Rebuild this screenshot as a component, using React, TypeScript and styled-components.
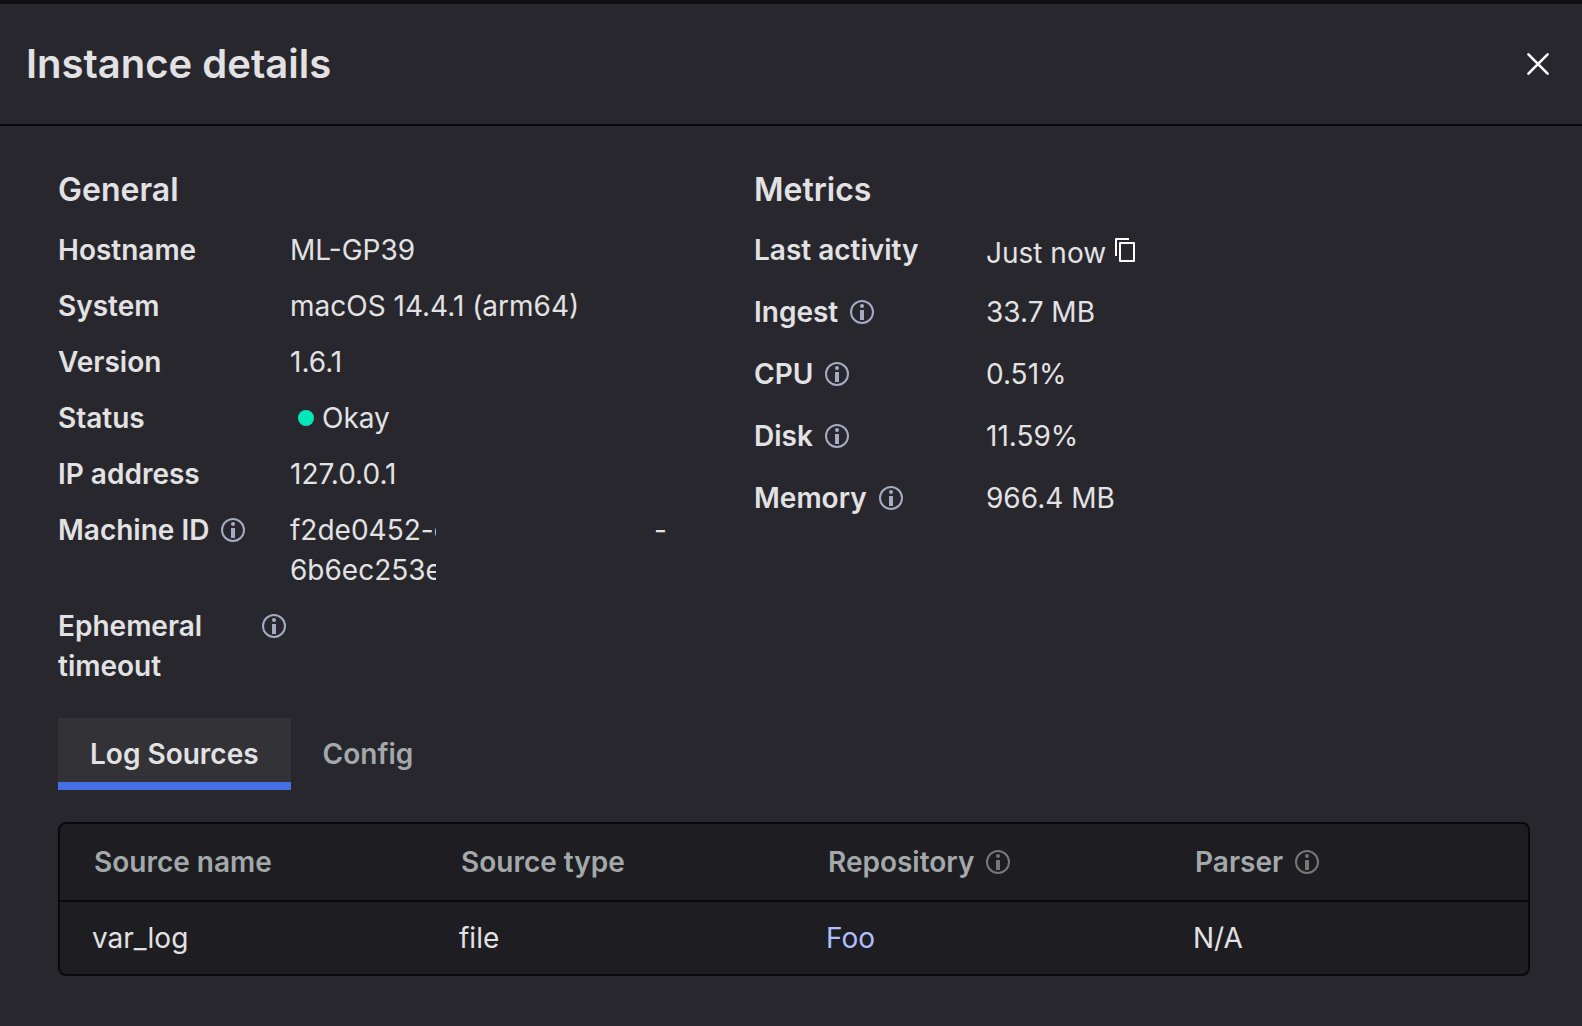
import React, { useState } from 'react';
import styled, { createGlobalStyle } from 'styled-components';

const color = {
  edge: '#101012',
  surface: '#28272d',
  line: '#09090b',
  table: '#1e1d22',
  tab: '#333237',
  text: '#e2e2e4',
  muted: '#a3a9ab',
  accent: '#466fe6',
  link: '#b1beff',
  ok: '#05e7ba',
  icon: '#a6abc3',
  iconMuted: '#777777',
};

const GlobalStyle = createGlobalStyle`
  *, *::before, *::after { box-sizing: border-box; }
  body {
    margin: 0;
    background: ${color.surface};
    color: ${color.text};
    font: 400 28px/40px Inter, "Liberation Sans", sans-serif;
  }
  h1, h2, dl, dd, dt { margin: 0; }
`;

const Panel = styled.main`
  min-height: 100vh;
  border-top: 4px solid ${color.edge};
`;

const Header = styled.header`
  display: flex;
  align-items: center;
  justify-content: space-between;
  height: 122px;
  padding: 0 24px 0 26px;
  border-bottom: 2px solid ${color.line};
`;

const Title = styled.h1`
  font-size: 40px;
  font-weight: 600;
  line-height: 48px;
`;

const IconButton = styled.button`
  display: flex;
  align-items: center;
  justify-content: center;
  height: 40px;
  padding: 0;
  border: 0;
  background: none;
  color: #ffffff;
  cursor: pointer;
`;

const CloseButton = styled(IconButton)`
  width: 40px;
`;

const Content = styled.div`
  padding: 44px 52px 48px 58px;
`;

const Groups = styled.div`
  display: grid;
  grid-template-columns: repeat(2, minmax(0, 1fr));
  max-width: 1392px;
`;

const GroupTitle = styled.h2`
  margin-bottom: 20px;
  font-size: 32px;
  font-weight: 600;
  line-height: 40px;
`;

const Details = styled.dl`
  display: flex;
  flex-direction: column;
  gap: 16px;
`;

const Row = styled.div<{ $tall?: boolean }>`
  display: grid;
  grid-template-columns: 232px minmax(0, 1fr);
  min-height: ${(p) => (p.$tall ? 46 : 40)}px;
`;

const Label = styled.dt`
  display: flex;
  gap: 12px;
  padding-right: 4px;
  font-weight: 600;
`;

const Status = styled.dd`
  display: flex;
  align-items: center;
  gap: 8px;
  padding-left: 8px;
`;

const Dot = styled.span`
  width: 16px;
  height: 16px;
  border-radius: 50%;
  background: ${color.ok};
`;

const Activity = styled.dd`
  display: flex;
  gap: 9px;
  line-height: 46px;
`;

const Line = styled.div`
  display: flex;
  gap: 218px;
`;

const Clip = styled.span`
  flex: none;
  width: 146px;
  overflow: hidden;
  white-space: nowrap;
`;

const InfoSvg = styled.svg`
  flex: none;
  height: 40px;
`;

const Tabs = styled.div`
  display: flex;
  margin: 32px 0;
`;

const Tab = styled.button<{ $active: boolean }>`
  height: 72px;
  padding: 8px 32px 0;
  border: 0;
  border-bottom: 8px solid ${(p) => (p.$active ? color.accent : 'transparent')};
  background: ${(p) => (p.$active ? color.tab : 'transparent')};
  color: ${(p) => (p.$active ? color.text : color.muted)};
  font: inherit;
  font-weight: 600;
  cursor: pointer;
`;

const TableFrame = styled.div`
  overflow: hidden;
  border: 2px solid ${color.line};
  border-radius: 8px;
  background: ${color.table};
`;

const Table = styled.table`
  width: 100%;
  border-collapse: separate;
  border-spacing: 0;
  table-layout: fixed;
  text-align: left;
`;

const HeadCell = styled.th`
  height: 78px;
  padding: 0 34px;
  border-bottom: 2px solid ${color.line};
  color: ${color.muted};
  font-weight: 600;
`;

const HeadContent = styled.div`
  display: flex;
  gap: 12px;
`;

const Cell = styled.td`
  height: 72px;
  padding: 0 32px;
`;

const Link = styled.a`
  color: ${color.link};
  text-decoration: none;
`;

function Info({ muted = false }: { muted?: boolean }) {
  const c = muted ? color.iconMuted : color.icon;
  return (
    <InfoSvg width="24" viewBox="0 0 24 24" aria-hidden="true">
      <circle cx="12" cy="12" r="11" fill="none" stroke={c} strokeWidth="2" />
      <circle cx="12" cy="6" r="2" fill={c} />
      <rect x="10" y="10" width="4" height="10" fill={c} />
    </InfoSvg>
  );
}

function Close() {
  return (
    <svg width="24" height="24" viewBox="0 0 24 24" aria-hidden="true">
      <path d="M2.4 2.4 21.6 21.6M21.6 2.4 2.4 21.6" fill="none" stroke="currentColor" strokeWidth="2.6" strokeLinecap="round" />
    </svg>
  );
}

function Copy() {
  return (
    <svg width="20" height="24" viewBox="0 0 20 24" aria-hidden="true">
      <path d="M14 1H1V18M5 5H19V23H5Z" fill="none" stroke="currentColor" strokeWidth="2" strokeLinejoin="round" />
    </svg>
  );
}

const metrics = [
  { name: 'Ingest', value: '33.7 MB' },
  { name: 'CPU', value: '0.51%' },
  { name: 'Disk', value: '11.59%' },
  { name: 'Memory', value: '966.4 MB' },
];

const columns = [
  { name: 'Source name', info: false },
  { name: 'Source type', info: false },
  { name: 'Repository', info: true },
  { name: 'Parser', info: true },
];

const tabs = ['Log Sources', 'Config'];

export default function App() {
  const [active, setActive] = useState(tabs[0]);

  return (
    <>
      <GlobalStyle />
      <Panel>
        <Header>
          <Title>Instance details</Title>
          <CloseButton type="button" aria-label="Close">
            <Close />
          </CloseButton>
        </Header>
        <Content>
          <Groups>
            <section>
              <GroupTitle>General</GroupTitle>
              <Details>
                <Row>
                  <Label>Hostname</Label>
                  <dd>ML-GP39</dd>
                </Row>
                <Row>
                  <Label>System</Label>
                  <dd>macOS 14.4.1 (arm64)</dd>
                </Row>
                <Row>
                  <Label>Version</Label>
                  <dd>1.6.1</dd>
                </Row>
                <Row>
                  <Label>Status</Label>
                  <Status>
                    <Dot />
                    Okay
                  </Status>
                </Row>
                <Row>
                  <Label>IP address</Label>
                  <dd>127.0.0.1</dd>
                </Row>
                <Row>
                  <Label>
                    Machine ID
                    <Info />
                  </Label>
                  <dd>
                    <Line>
                      <Clip>f2de0452-c</Clip>
                      <span>-</span>
                    </Line>
                    <Line>
                      <Clip>6b6ec253e</Clip>
                    </Line>
                  </dd>
                </Row>
                <Row>
                  <Label>
                    Ephemeral timeout
                    <Info />
                  </Label>
                  <dd />
                </Row>
              </Details>
            </section>
            <section>
              <GroupTitle>Metrics</GroupTitle>
              <Details>
                <Row $tall>
                  <Label>Last activity</Label>
                  <Activity>
                    Just now
                    <IconButton type="button" aria-label="Copy last activity">
                      <Copy />
                    </IconButton>
                  </Activity>
                </Row>
                {metrics.map((m) => (
                  <Row key={m.name} $tall>
                    <Label>
                      {m.name}
                      <Info />
                    </Label>
                    <dd>{m.value}</dd>
                  </Row>
                ))}
              </Details>
            </section>
          </Groups>
          <Tabs role="tablist">
            {tabs.map((name) => (
              <Tab
                key={name}
                type="button"
                role="tab"
                aria-selected={name === active}
                $active={name === active}
                onClick={() => setActive(name)}
              >
                {name}
              </Tab>
            ))}
          </Tabs>
          <TableFrame>
            <Table>
              <thead>
                <tr>
                  {columns.map((c) => (
                    <HeadCell key={c.name} scope="col">
                      <HeadContent>
                        {c.name}
                        {c.info && <Info muted />}
                      </HeadContent>
                    </HeadCell>
                  ))}
                </tr>
              </thead>
              <tbody>
                <tr>
                  <Cell>var_log</Cell>
                  <Cell>file</Cell>
                  <Cell>
                    <Link href="#foo">Foo</Link>
                  </Cell>
                  <Cell>N/A</Cell>
                </tr>
              </tbody>
            </Table>
          </TableFrame>
        </Content>
      </Panel>
    </>
  );
}
